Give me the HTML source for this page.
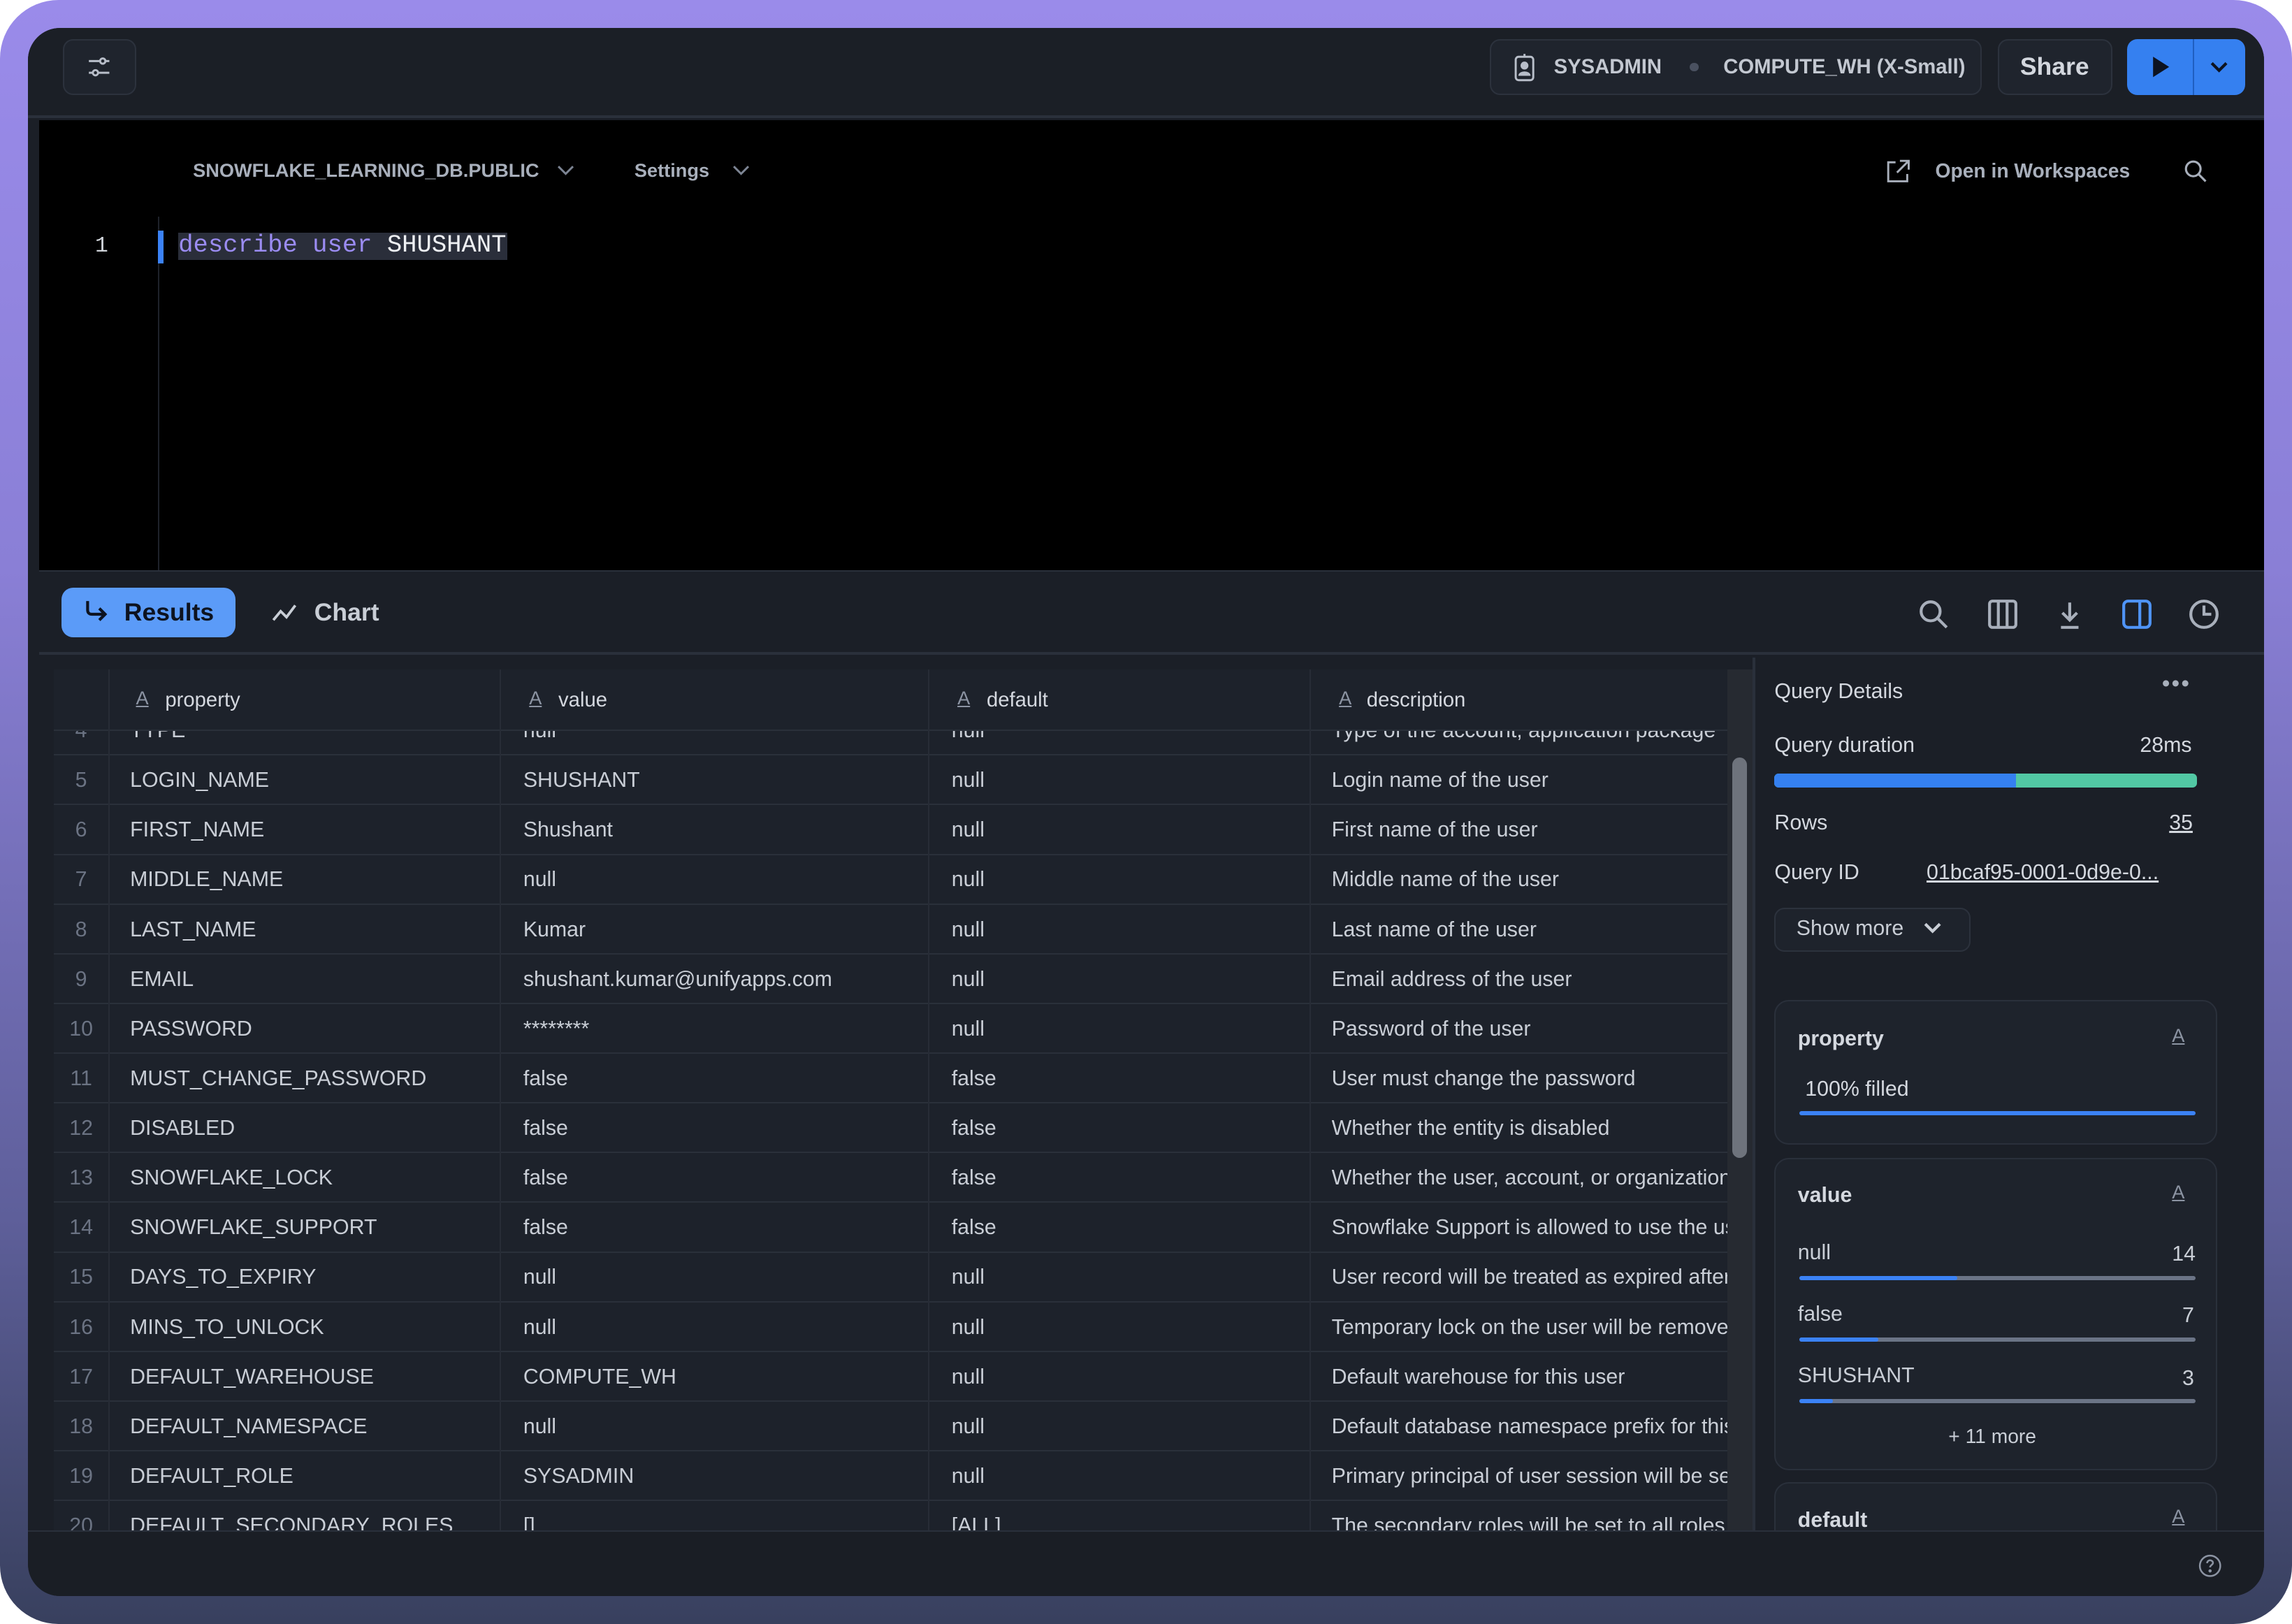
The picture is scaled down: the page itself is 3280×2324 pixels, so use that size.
<!DOCTYPE html>
<html><head><meta charset="utf-8"><style>
*{margin:0;padding:0;box-sizing:border-box}
html,body{width:3280px;height:2324px;overflow:hidden;background:#fff}
#z{zoom:2.0918;width:1568px;height:1111px;position:relative;font-family:"Liberation Sans",sans-serif;color:#c9ced6}
.bg{position:absolute;left:0;top:0;width:1568px;height:1111px;border-radius:40px;background:linear-gradient(180deg,#9a8bea 0%,#8a7fd6 35%,#5e5f9a 75%,#38405e 100%)}
.win{position:absolute;left:19px;top:19px;width:1530px;height:1073px;border-radius:22px;background:#1b1f27;overflow:hidden}
.a{position:absolute}
.top{left:0;top:0;width:1530px;height:62px;background:#1b1f26;border-bottom:2px solid #2a303b}
.btn{border:1px solid #2c323d;background:#1f242d;border-radius:7px}
.ed{left:8px;top:63px;width:1522px;height:308px;background:#000}
.t{white-space:nowrap}
.row{position:absolute;left:0;width:1145px;height:34px;border-top:1px solid #2a303a;font-size:14.5px}
.row span{position:absolute;top:9px;white-space:nowrap;overflow:hidden}
.c0{left:0;width:37px;text-align:center;color:#6b7383}
.c1{left:52px}.c2{left:321px}.c3{left:614px}.c4{left:874px;width:271px}
.card{position:absolute;left:1195px;width:303px;border:1px solid #2a303b;background:#1e232c;border-radius:10px}
.bar{position:absolute;left:16px;width:271px;height:3px;background:#6b7486;border-radius:2px}
.bar i{display:block;height:3px;background:#3b82f6;border-radius:2px}
.AA{position:absolute;font-size:13px;color:#8c94a3;text-decoration:underline}
</style></head><body><div id="z">
<div class="bg"></div>
<div class="win">
 <div class="a top"></div>
 <div class="a btn" style="left:24px;top:8px;width:50px;height:38px"></div>
 <svg class="a" style="left:40px;top:19px" width="18" height="16" viewBox="0 0 18 16" fill="none" stroke="#b8bec9" stroke-width="1.4"><path d="M2 4h8M13 4h3M2 12h3M8 12h8"/><circle cx="11.5" cy="4" r="1.8"/><circle cx="6.5" cy="12" r="1.8"/></svg>
 <div class="a btn" style="left:1000px;top:8px;width:337px;height:38px"></div>
 <svg class="a" style="left:1017px;top:17px" width="14" height="20" viewBox="0 0 14 20" fill="none" stroke="#b8bec9" stroke-width="1.4"><rect x="1" y="3" width="12" height="16" rx="2"/><path d="M7 1v2"/><circle cx="7" cy="9" r="2" fill="#b8bec9"/><path d="M3.5 16c0-3 7-3 7 0" fill="#b8bec9"/></svg>
 <div class="a t" style="left:1044px;top:19px;font-size:14px;font-weight:bold;color:#c3c8d1">SYSADMIN</div>
 <div class="a" style="left:1137px;top:24px;width:6px;height:6px;border-radius:3px;background:#4a5160"></div>
 <div class="a t" style="left:1160px;top:19px;font-size:14px;font-weight:bold;color:#c3c8d1">COMPUTE_WH (X-Small)</div>
 <div class="a btn" style="left:1348px;top:8px;width:78px;height:38px"></div>
 <div class="a t" style="left:1363px;top:17px;font-size:17px;font-weight:bold;color:#d3d7de">Share</div>
 <div class="a" style="left:1436px;top:8px;width:81px;height:38px;background:#3580f0;border-radius:7px"></div>
 <div class="a" style="left:1481px;top:8px;width:1px;height:38px;background:#1f5fc0"></div>
 <svg class="a" style="left:1452px;top:19px" width="14" height="16" viewBox="0 0 14 16"><path d="M2 1l11 7-11 7z" fill="#0d1320"/></svg>
 <svg class="a" style="left:1492px;top:20px" width="14" height="14" viewBox="0 0 14 14" fill="none" stroke="#0d1320" stroke-width="2"><path d="M2 4l5 5 5-5"/></svg>

 <div class="a ed"></div>
 <div class="a t" style="left:113px;top:90px;font-size:13px;font-weight:bold;color:#a8afbb">SNOWFLAKE_LEARNING_DB.PUBLIC</div>
 <svg class="a" style="left:362px;top:93px" width="12" height="10" viewBox="0 0 12 10" fill="none" stroke="#7d8594" stroke-width="1.4"><path d="M1 2l5 5 5-5"/></svg>
 <div class="a t" style="left:415px;top:90px;font-size:13px;font-weight:bold;color:#a8afbb">Settings</div>
 <svg class="a" style="left:482px;top:93px" width="12" height="10" viewBox="0 0 12 10" fill="none" stroke="#7d8594" stroke-width="1.4"><path d="M1 2l5 5 5-5"/></svg>
 <svg class="a" style="left:1271px;top:89px" width="18" height="18" viewBox="0 0 18 18" fill="none" stroke="#a8afbb" stroke-width="1.4"><path d="M7 3H2v13h13v-5M10 2h6v6M16 2L8 10"/></svg>
 <div class="a t" style="left:1305px;top:90px;font-size:13.5px;font-weight:bold;color:#a8afbb">Open in Workspaces</div>
 <svg class="a" style="left:1474px;top:89px" width="18" height="18" viewBox="0 0 18 18" fill="none" stroke="#a8afbb" stroke-width="1.5"><circle cx="7.5" cy="7.5" r="5"/><path d="M11 11l5 5"/></svg>
 <div class="a" style="left:89px;top:129px;width:1px;height:242px;background:#1e222a"></div>
 <div class="a t" style="left:46px;top:141px;font-family:'Liberation Mono',monospace;font-size:15px;color:#d0d4da">1</div>
 <div class="a" style="left:89px;top:139px;width:4px;height:22px;background:#3b82f6"></div>
 <div class="a" style="left:103px;top:140px;width:225px;height:19px;background:#2a2e3a"></div>
 <div class="a t" style="left:103px;top:139px;font-family:'Liberation Mono',monospace;font-size:17px;color:#9b8cf2">describe user <span style="color:#eef0f3">SHUSHANT</span></div>

 <!-- results bar -->
 <div class="a" style="left:8px;top:371px;width:1522px;height:58px;border-top:1px solid #2a303b;border-bottom:2px solid #2a303b;background:#1b1f27"></div>
 <div class="a" style="left:23px;top:383px;width:119px;height:34px;background:#5b9bf8;border-radius:8px"></div>
 <svg class="a" style="left:37px;top:390px" width="20" height="18" viewBox="0 0 20 18" fill="none" stroke="#0d1320" stroke-width="2"><path d="M4 2v6c0 2 1 3 3 3h9M12 7l4 4-4 4"/></svg>
 <div class="a t" style="left:66px;top:390px;font-size:17px;font-weight:bold;color:#0d1320">Results</div>
 <svg class="a" style="left:166px;top:391px" width="20" height="18" viewBox="0 0 20 18" fill="none" stroke="#c9ced6" stroke-width="1.8"><path d="M2 14l5-6 4 4 6-8"/></svg>
 <div class="a t" style="left:196px;top:390px;font-size:17px;font-weight:bold;color:#c9ced6">Chart</div>
 <svg class="a" style="left:1293px;top:390px" width="22" height="22" viewBox="0 0 22 22" fill="none" stroke="#a8afbb" stroke-width="2"><circle cx="9" cy="9" r="6.5"/><path d="M14 14l6 6"/></svg>
 <svg class="a" style="left:1340px;top:390px" width="22" height="22" viewBox="0 0 22 22" fill="none" stroke="#a8afbb" stroke-width="2"><rect x="2" y="2" width="18" height="18" rx="2"/><path d="M8 2v18M14 2v18"/></svg>
 <svg class="a" style="left:1387px;top:390px" width="20" height="22" viewBox="0 0 20 22" fill="none" stroke="#a8afbb" stroke-width="2"><path d="M10 3v12M5 10l5 5 5-5M4 20h12"/></svg>
 <svg class="a" style="left:1432px;top:390px" width="22" height="22" viewBox="0 0 22 22" fill="none" stroke="#4f94f7" stroke-width="2"><rect x="2" y="2" width="18" height="18" rx="3"/><path d="M13 2v18"/></svg>
 <svg class="a" style="left:1478px;top:390px" width="22" height="22" viewBox="0 0 22 22" fill="none" stroke="#a8afbb" stroke-width="2"><circle cx="11" cy="11" r="9"/><path d="M11 5v6h5"/></svg>

 <!-- table -->
 <div class="a" style="left:8px;top:431px;width:1173px;height:597px;background:#1b1f27"></div>
 <div class="a" style="left:18px;top:439px;width:1145px;height:590px;background:#1d222b;overflow:hidden">
  <div style="position:absolute;left:0;top:-438px;width:1145px">
   <div class="row" style="top:462px"><span class="c0">4</span><span class="c1">TYPE</span><span class="c2">null</span><span class="c3">null</span><span class="c4">Type of the account, application package</span></div>
   <div class="row" style="top:496px"><span class="c0">5</span><span class="c1">LOGIN_NAME</span><span class="c2">SHUSHANT</span><span class="c3">null</span><span class="c4">Login name of the user</span></div>
   <div class="row" style="top:530px"><span class="c0">6</span><span class="c1">FIRST_NAME</span><span class="c2">Shushant</span><span class="c3">null</span><span class="c4">First name of the user</span></div>
   <div class="row" style="top:564px"><span class="c0">7</span><span class="c1">MIDDLE_NAME</span><span class="c2">null</span><span class="c3">null</span><span class="c4">Middle name of the user</span></div>
   <div class="row" style="top:598px"><span class="c0">8</span><span class="c1">LAST_NAME</span><span class="c2">Kumar</span><span class="c3">null</span><span class="c4">Last name of the user</span></div>
   <div class="row" style="top:632px"><span class="c0">9</span><span class="c1">EMAIL</span><span class="c2">shushant.kumar@unifyapps.com</span><span class="c3">null</span><span class="c4">Email address of the user</span></div>
   <div class="row" style="top:666px"><span class="c0">10</span><span class="c1">PASSWORD</span><span class="c2">********</span><span class="c3">null</span><span class="c4">Password of the user</span></div>
   <div class="row" style="top:700px"><span class="c0">11</span><span class="c1">MUST_CHANGE_PASSWORD</span><span class="c2">false</span><span class="c3">false</span><span class="c4">User must change the password</span></div>
   <div class="row" style="top:734px"><span class="c0">12</span><span class="c1">DISABLED</span><span class="c2">false</span><span class="c3">false</span><span class="c4">Whether the entity is disabled</span></div>
   <div class="row" style="top:768px"><span class="c0">13</span><span class="c1">SNOWFLAKE_LOCK</span><span class="c2">false</span><span class="c3">false</span><span class="c4">Whether the user, account, or organization is locked</span></div>
   <div class="row" style="top:802px"><span class="c0">14</span><span class="c1">SNOWFLAKE_SUPPORT</span><span class="c2">false</span><span class="c3">false</span><span class="c4">Snowflake Support is allowed to use the user</span></div>
   <div class="row" style="top:836px"><span class="c0">15</span><span class="c1">DAYS_TO_EXPIRY</span><span class="c2">null</span><span class="c3">null</span><span class="c4">User record will be treated as expired after</span></div>
   <div class="row" style="top:870px"><span class="c0">16</span><span class="c1">MINS_TO_UNLOCK</span><span class="c2">null</span><span class="c3">null</span><span class="c4">Temporary lock on the user will be removed</span></div>
   <div class="row" style="top:904px"><span class="c0">17</span><span class="c1">DEFAULT_WAREHOUSE</span><span class="c2">COMPUTE_WH</span><span class="c3">null</span><span class="c4">Default warehouse for this user</span></div>
   <div class="row" style="top:938px"><span class="c0">18</span><span class="c1">DEFAULT_NAMESPACE</span><span class="c2">null</span><span class="c3">null</span><span class="c4">Default database namespace prefix for this user</span></div>
   <div class="row" style="top:972px"><span class="c0">19</span><span class="c1">DEFAULT_ROLE</span><span class="c2">SYSADMIN</span><span class="c3">null</span><span class="c4">Primary principal of user session will be set</span></div>
   <div class="row" style="top:1006px"><span class="c0">20</span><span class="c1">DEFAULT_SECONDARY_ROLES</span><span class="c2">[]</span><span class="c3">[ALL]</span><span class="c4">The secondary roles will be set to all roles</span></div>
  </div>
  <div style="position:absolute;left:37px;top:0;width:1px;height:590px;background:#272c36"></div>
  <div style="position:absolute;left:305px;top:0;width:1px;height:590px;background:#272c36"></div>
  <div style="position:absolute;left:598px;top:0;width:1px;height:590px;background:#272c36"></div>
  <div style="position:absolute;left:859px;top:0;width:1px;height:590px;background:#272c36"></div>
  <!-- header -->
  <div style="position:absolute;left:0;top:0;width:1145px;height:42px;background:#1d222b;border-bottom:1px solid #2a303a;font-size:14px;color:#d4d8df">
   <div style="position:absolute;left:37px;top:0;width:1px;height:42px;background:#272c36"></div>
   <div style="position:absolute;left:305px;top:0;width:1px;height:42px;background:#272c36"></div>
   <div style="position:absolute;left:598px;top:0;width:1px;height:42px;background:#272c36"></div>
   <div style="position:absolute;left:859px;top:0;width:1px;height:42px;background:#272c36"></div>
   <span class="AA" style="left:56px;top:12px">A</span><span style="position:absolute;left:76px;top:13px">property</span>
   <span class="AA" style="left:325px;top:12px">A</span><span style="position:absolute;left:345px;top:13px">value</span>
   <span class="AA" style="left:618px;top:12px">A</span><span style="position:absolute;left:638px;top:13px">default</span>
   <span class="AA" style="left:879px;top:12px">A</span><span style="position:absolute;left:898px;top:13px">description</span>
  </div>
 </div>
 <div class="a" style="left:1163px;top:439px;width:17px;height:590px;background:#262a31"></div>
 <div class="a" style="left:1166px;top:499px;width:10px;height:274px;background:#6e737c;border-radius:5px"></div>
 <div class="a" style="left:1180px;top:431px;width:2px;height:597px;background:#2a303b"></div>

 <!-- right panel -->
 <div class="a t" style="left:1195px;top:446px;font-size:14.5px;color:#d4d8df">Query Details</div>
 <div class="a t" style="left:1460px;top:440px;font-size:16px;color:#a8afbb;letter-spacing:1px">•••</div>
 <div class="a t" style="left:1195px;top:483px;font-size:14.5px;color:#d4d8df">Query duration</div>
 <div class="a t" style="left:1445px;top:483px;font-size:14.5px;color:#d4d8df">28ms</div>
 <div class="a" style="left:1195px;top:510px;width:289px;height:10px;border-radius:3px;background:#52c8a4;overflow:hidden"><div style="width:165px;height:10px;background:#3580f0"></div></div>
 <div class="a t" style="left:1195px;top:536px;font-size:14.5px;color:#d4d8df">Rows</div>
 <div class="a t" style="left:1465px;top:536px;font-size:14.5px;color:#d4d8df;text-decoration:underline">35</div>
 <div class="a t" style="left:1195px;top:570px;font-size:14.5px;color:#d4d8df">Query ID</div>
 <div class="a t" style="left:1299px;top:570px;font-size:14.5px;color:#d4d8df;text-decoration:underline">01bcaf95-0001-0d9e-0...</div>
 <div class="a btn" style="left:1195px;top:602px;width:134px;height:30px;background:#1e232c"></div>
 <div class="a t" style="left:1210px;top:608px;font-size:14.5px;color:#c9ced6">Show more</div>
 <svg class="a" style="left:1296px;top:610px" width="14" height="12" viewBox="0 0 14 12" fill="none" stroke="#c9ced6" stroke-width="2"><path d="M2 3l5 5 5-5"/></svg>

 <div class="card" style="top:665px;height:99px">
  <div class="a t" style="left:15px;top:18px;font-size:14.5px;font-weight:bold;color:#d4d8df">property</div>
  <span class="AA" style="left:271px;top:16px">A</span>
  <div class="a t" style="left:20px;top:52px;font-size:14.5px;color:#d4d8df">100% filled</div>
  <div class="bar" style="top:75px;background:#3b82f6"></div>
 </div>
 <div class="card" style="top:773px;height:214px">
  <div class="a t" style="left:15px;top:17px;font-size:14.5px;font-weight:bold;color:#d4d8df">value</div>
  <span class="AA" style="left:271px;top:15px">A</span>
  <div class="a t" style="left:15px;top:56px;font-size:14.5px">null</div><div class="a t" style="left:271px;top:57px;font-size:14.5px">14</div>
  <div class="bar" style="top:80px"><i style="width:108px"></i></div>
  <div class="a t" style="left:15px;top:98px;font-size:14.5px">false</div><div class="a t" style="left:278px;top:99px;font-size:14.5px">7</div>
  <div class="bar" style="top:122px"><i style="width:54px"></i></div>
  <div class="a t" style="left:15px;top:140px;font-size:14.5px">SHUSHANT</div><div class="a t" style="left:278px;top:142px;font-size:14.5px">3</div>
  <div class="bar" style="top:164px"><i style="width:23px"></i></div>
  <div class="a t" style="left:118px;top:182px;font-size:13.5px">+ 11 more</div>
 </div>
 <div class="card" style="top:995px;height:80px">
  <div class="a t" style="left:15px;top:17px;font-size:14.5px;font-weight:bold;color:#d4d8df">default</div>
  <span class="AA" style="left:271px;top:15px">A</span>
 </div>

 <!-- footer -->
 <div class="a" style="left:0;top:1028px;width:1530px;height:45px;background:#1a1e25;border-top:1px solid #2a303b"></div>
 <svg class="a" style="left:1485px;top:1044px" width="16" height="16" viewBox="0 0 16 16" fill="none" stroke="#8c94a3" stroke-width="1.2"><circle cx="8" cy="8" r="7"/><path d="M6 6.2c0-1.2 1-2 2-2s2 .8 2 1.8c0 1.4-2 1.5-2 3"/><circle cx="8" cy="11.5" r=".5" fill="#8c94a3"/></svg>
</div>
</div></body></html>
